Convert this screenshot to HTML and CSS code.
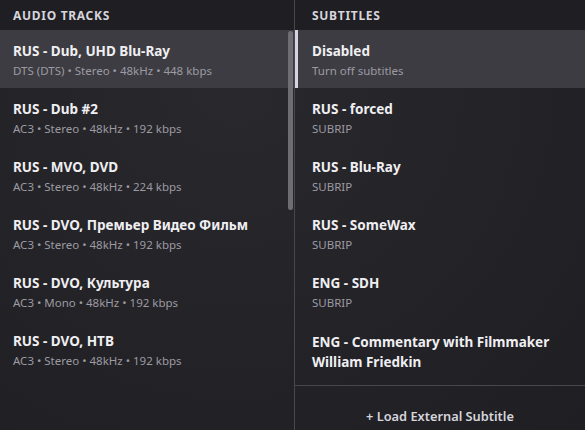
FILE: index.html
```html
<!DOCTYPE html>
<html>
<head>
<meta charset="utf-8">
<link rel="stylesheet" href="styles.css">
</head>
<body>
<div class="panel">
  <div class="pane pane-left">
    <div class="head">AUDIO TRACKS</div>
    <div class="list">
      <div class="row selected"><div class="title">RUS - Dub, UHD Blu-Ray</div><div class="sub">DTS (DTS) • Stereo • 48kHz • 448 kbps</div></div>
      <div class="row"><div class="title">RUS - Dub #2</div><div class="sub">AC3 • Stereo • 48kHz • 192 kbps</div></div>
      <div class="row"><div class="title">RUS - MVO, DVD</div><div class="sub">AC3 • Stereo • 48kHz • 224 kbps</div></div>
      <div class="row"><div class="title">RUS - DVO, Премьер Видео Фильм</div><div class="sub">AC3 • Stereo • 48kHz • 192 kbps</div></div>
      <div class="row"><div class="title">RUS - DVO, Культура</div><div class="sub">AC3 • Mono • 48kHz • 192 kbps</div></div>
      <div class="row"><div class="title">RUS - DVO, НТВ</div><div class="sub">AC3 • Stereo • 48kHz • 192 kbps</div></div>
    </div>
    <div class="scrollbar"></div>
  </div>
  <div class="pane pane-right">
    <div class="head">SUBTITLES</div>
    <div class="list">
      <div class="row srow selected"><div class="title">Disabled</div><div class="sub">Turn off subtitles</div></div>
      <div class="row srow"><div class="title">RUS - forced</div><div class="sub">SUBRIP</div></div>
      <div class="row srow"><div class="title">RUS - Blu-Ray</div><div class="sub">SUBRIP</div></div>
      <div class="row srow"><div class="title">RUS - SomeWax</div><div class="sub">SUBRIP</div></div>
      <div class="row srow"><div class="title">ENG - SDH</div><div class="sub">SUBRIP</div></div>
      <div class="row srow tall"><div class="title">ENG - Commentary with Filmmaker William Friedkin</div></div>
    </div>
    <div class="foot">+ Load External Subtitle</div>
  </div>
</div>
</body>
</html>
```
FILE: styles.css
```css
html, body {
  margin: 0;
  padding: 0;
  height: 100%;
}
body {
  background: radial-gradient(ellipse at 40% 20%, #29282d 0%, #232227 60%, #1f1e23 100%);
  font-family: "Noto Sans", "Open Sans", sans-serif;
  color: #ececf0;
  overflow: hidden;
}
.panel {
  display: flex;
  height: 430px;
}
.pane {
  display: flex;
  flex-direction: column;
  position: relative;
}
.pane-left {
  width: 294px;
  border-right: 1px solid #48474d;
}
.pane-right {
  flex: 1;
}
.head {
  height: 30px;
  background: #1f1e23;
  display: flex;
  align-items: center;
  padding-left: 13px;
  font-size: 12px;
  font-weight: 700;
  letter-spacing: 0.7px;
  color: #d6d5dc;
}
.pane-right .head {
  padding-left: 17px;
}
.row {
  height: 58px;
  box-sizing: border-box;
  padding: 12px 13px 0;
}
.srow {
  padding-left: 14px;
  border-left: 3px solid transparent;
}
.row.selected {
  background: #3c3c42;
}
.srow.selected {
  border-left-color: #d6d4e2;
}
.title {
  font-size: 13.5px;
  font-weight: 700;
  line-height: 18px;
  color: #efeff2;
}
.sub {
  font-size: 11.5px;
  line-height: 15px;
  margin-top: 3px;
  color: #9c9ba2;
}
.tall {
  height: 64px;
  padding-right: 30px;
}
.tall .title {
  line-height: 20px;
}
.foot {
  border-top: 1px solid #48474d;
  margin-top: auto;
  height: 45px;
  box-sizing: border-box;
  padding-top: 21px;
  text-align: center;
  font-size: 12.8px;
  font-weight: 600;
  color: #d6d5dc;
}
.scrollbar {
  position: absolute;
  left: 288px;
  top: 31px;
  width: 5px;
  height: 179px;
  border-radius: 3px;
  background: #6d6d73;
}
```
